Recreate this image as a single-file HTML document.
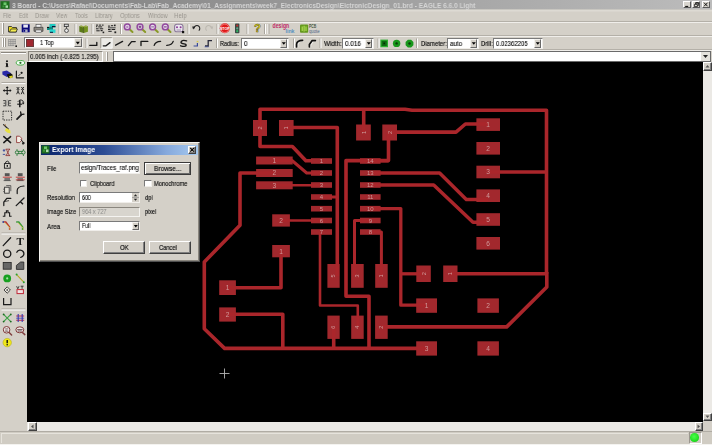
<!DOCTYPE html>
<html><head><meta charset="utf-8">
<style>
html,body{margin:0;padding:0;}
body{width:712px;height:445px;overflow:hidden;background:#d4d0c8;position:relative;font-family:"Liberation Sans",sans-serif;font-size:7px;color:#000;}
.a{position:absolute;}
.t{position:absolute;white-space:nowrap;line-height:1;transform-origin:0 0;will-change:transform;}
#title{left:0;top:0;width:712px;height:9px;background:linear-gradient(90deg,#7e7e7e 0%,#bcbcbc 100%);box-shadow:0 1px 0 #c8c6c0, 0 2.5px 0 #dddad3;}
#canvas{left:27px;top:62px;width:676px;height:360px;background:#000;}
.inp{position:absolute;background:#fff;border:1px solid #7a7a7a;border-right-color:#f0eeea;border-bottom-color:#f0eeea;box-sizing:border-box;}
.btn{position:absolute;background:#d4d0c8;border:1px solid #fff;border-right-color:#404040;border-bottom-color:#404040;box-sizing:border-box;box-shadow:inset -1px -1px 0 #808080;}
.sep{position:absolute;width:1px;background:#b0aca4;box-shadow:1px 0 0 #f4f2ee;}
.hl{position:absolute;height:1px;background:#b4b0a8;box-shadow:0 1px 0 #f0eeea;}
.m{color:#9a968f;font-size:7.6px;top:11.5px;}
.lab{font-size:7.7px;color:#000;-webkit-text-stroke:0.2px #333;}
.dd{position:absolute;background:#d4d0c8;border:1px solid #f4f2ee;border-right-color:#6a6a6a;border-bottom-color:#6a6a6a;box-sizing:border-box;}
</style></head><body>
<!-- title bar -->
<div id="title" class="a"></div>
<svg class="a" style="left:0;top:0" width="12" height="10"><rect x="0.5" y="1.2" width="9" height="7.6" fill="#1e6e1e"/><rect x="3.5" y="2.4" width="3" height="2.6" fill="#6cc86c"/><rect x="5.5" y="5.4" width="2.5" height="2.4" fill="#a8dca8"/><rect x="2.5" y="5.4" width="2" height="2" fill="#3c983c"/></svg>
<div class="t" id="ttl" style="transform:scaleX(0.9115);left:12px;top:1.6px;font-size:7.2px;font-weight:bold;color:#d6d6d6;">3 Board - C:\Users\Rafael\Documents\Fab-Lab\Fab_Academy\01_Assignments\week7_ElectronicsDesign\ElctronicDesign_01.brd - EAGLE 6.6.0 Light</div>
<!-- window buttons -->
<div class="btn" style="left:682.6px;top:1px;width:8.4px;height:6.8px;box-shadow:none;border-right-color:#5a5a5a;border-bottom-color:#5a5a5a;background:#d8d5ce;"></div>
<div class="btn" style="left:692px;top:1px;width:8.2px;height:6.8px;box-shadow:none;border-right-color:#5a5a5a;border-bottom-color:#5a5a5a;background:#d8d5ce;"></div>
<div class="btn" style="left:702px;top:1px;width:8.4px;height:6.8px;box-shadow:none;border-right-color:#5a5a5a;border-bottom-color:#5a5a5a;background:#d8d5ce;"></div>
<svg class="a" style="left:682px;top:1px" width="30" height="7" fill="none" stroke="#000"><path d="M3.2,5.4 H6.2" stroke-width="1"/><path d="M12.4,3.4 h3 v2.2 h-3z M13.6,3 v-1 h3 v2.4 h-1" stroke-width=".7"/><path d="M13.4,1.8 h3.4" stroke-width=".9"/><path d="M22,1.7 l3.6,3.6 M25.6,1.7 l-3.6,3.6" stroke-width=".9"/></svg>
<!-- menu -->
<div class="t m" style="transform:scaleX(0.6694);left:2.8px;">File</div>
<div class="t m" style="transform:scaleX(0.6874);left:19px;">Edit</div>
<div class="t m" style="transform:scaleX(0.7894);left:35px;">Draw</div>
<div class="t m" style="transform:scaleX(0.6982);left:56px;">View</div>
<div class="t m" style="transform:scaleX(0.7218);left:75px;">Tools</div>
<div class="t m" style="transform:scaleX(0.7537);left:95px;">Library</div>
<div class="t m" style="transform:scaleX(0.7527);left:120.2px;">Options</div>
<div class="t m" style="transform:scaleX(0.7255);left:147.6px;">Window</div>
<div class="t m" style="transform:scaleX(0.8128);left:174.3px;">Help</div>
<div class="hl" style="left:0;top:20.5px;width:712px;"></div>
<!-- toolbar 1 -->
<div class="a" style="left:2px;top:23px;width:1px;height:11px;background:#fff;box-shadow:1px 0 0 #9a968e;"></div>
<svg class="a" style="left:0;top:21px" width="330" height="15">
<g><path d="M8.5,5.5 h3 l1,1 h4 v4.5 h-8z" fill="#e8d820" stroke="#222" stroke-width=".8"/><path d="M9.5,11 l1.5,-3 h6.5 l-1.5,3z" fill="#f4ec50" stroke="#222" stroke-width=".7"/></g>
<g><rect x="21.7" y="3.3" width="8" height="8" fill="#0a0a7a"/><rect x="23.3" y="3.6" width="4.6" height="3" fill="#e8e8f4"/><rect x="23.6" y="8.4" width="4" height="2.9" fill="#b0b0c8"/><rect x="24" y="8.8" width="1.2" height="2" fill="#0a0a7a"/></g>
<g><rect x="36" y="3.3" width="5" height="3" fill="#f0f0f0" stroke="#444" stroke-width=".6"/><path d="M34,6.3 h9 v4 h-9z" fill="#8c8880" stroke="#3a3a3a" stroke-width=".7"/><rect x="35.8" y="9" width="5.4" height="2.6" fill="#e4e4e4" stroke="#444" stroke-width=".5"/></g>
<g><rect x="49.5" y="3" width="6" height="3.4" fill="#20c8c0"/><rect x="47" y="5.8" width="6" height="3.2" fill="#108880"/><rect x="49.5" y="8.4" width="6" height="3.4" fill="#28d8d0"/><rect x="47" y="6" width="2" height="1" fill="#111"/><rect x="52" y="5" width="3.5" height="1.2" fill="#113"/><rect x="50" y="10.8" width="3" height="1" fill="#113"/></g>
<path d="M59,3 V13" stroke="#a8a49c" stroke-width="1"/><path d="M60,3 V13" stroke="#fff" stroke-width="1"/>
<g fill="none" stroke="#333" stroke-width=".8"><rect x="64.3" y="3.2" width="4" height="2.4" fill="#ddd"/><circle cx="66.5" cy="9.6" r="1.9" fill="#e8e8e8"/><path d="M66.5,5.6 V7.7"/></g>
<path d="M75,3 V13" stroke="#a8a49c" stroke-width="1"/><path d="M76,3 V13" stroke="#fff" stroke-width="1"/>
<g><path d="M79.3,5 l4.2,1.3 v5.7 l-4.2,-1.3z" fill="#5a7818"/><path d="M87.9,5 l-4.2,1.3 v5.7 l4.2,-1.3z" fill="#74921e"/><path d="M80.5,4 l3,1.2 l3,-1.2 v1.5 l-3,1.2 l-3,-1.2z" fill="#94a840"/><path d="M83.6,6 v6" stroke="#38480c" stroke-width=".7"/></g>
<path d="M92,3 V13" stroke="#a8a49c" stroke-width="1"/><path d="M93,3 V13" stroke="#fff" stroke-width="1"/>
<g fill="#222"><rect x="96" y="3.6" width="2.2" height="1" /><rect x="99" y="3.6" width="2.2" height="1"/><rect x="102" y="3.6" width="1.6" height="1"/><rect x="96" y="5.2" width="1.3" height="1"/><rect x="98.2" y="5.4" width="4" height="1"/><rect x="96" y="7.3" width="2.6" height="1"/><rect x="99.6" y="7.3" width="3.6" height="1"/><rect x="96.3" y="9.3" width="3.4" height="1"/><rect x="100.6" y="9" width="2" height="1.2"/><rect x="102.6" y="10.6" width="1.6" height="1.6"/></g>
<g fill="#222"><rect x="108" y="4.6" width="2.2" height="1" /><rect x="111" y="4.2" width="2.2" height="1"/><rect x="114" y="3.6" width="1.6" height="1.6"/><rect x="108" y="6.2" width="7.6" height="1.2" fill="#555"/><rect x="108" y="8" width="2.6" height="1"/><rect x="111.6" y="8" width="3.6" height="1"/><rect x="108.3" y="9.8" width="3.4" height="1"/><rect x="114.4" y="10.4" width="1.8" height="1.8"/></g>
<path d="M120.5,3 V13" stroke="#a8a49c" stroke-width="1"/><path d="M121.5,3 V13" stroke="#fff" stroke-width="1"/>
<g><path d="M129.3,8 L132.5,11" stroke="#8a9a28" stroke-width="2" stroke-linecap="round"/><circle cx="127.3" cy="5.9" r="2.9" fill="#e8dcec" stroke="#924a9e" stroke-width="1.5"/><circle cx="127.3" cy="5.9" r="1.2" fill="#8a3898" opacity=".5"/></g>
<g><path d="M142,8 L145.2,11" stroke="#8a9a28" stroke-width="2" stroke-linecap="round"/><circle cx="140" cy="5.9" r="2.9" fill="#e8dcec" stroke="#924a9e" stroke-width="1.5"/><path d="M138.6,5.9 h2.8 M140,4.5 v2.8" stroke="#5a2868" stroke-width=".9"/></g>
<g><path d="M154.6,8 L157.79999999999998,11" stroke="#8a9a28" stroke-width="2" stroke-linecap="round"/><circle cx="152.6" cy="5.9" r="2.9" fill="#e8dcec" stroke="#924a9e" stroke-width="1.5"/><path d="M151.2,5.9 h2.8" stroke="#7a5888" stroke-width=".9"/></g>
<g><path d="M167.3,8 L170.5,11" stroke="#8a9a28" stroke-width="2" stroke-linecap="round"/><circle cx="165.3" cy="5.9" r="2.9" fill="#e8dcec" stroke="#924a9e" stroke-width="1.5"/><path d="M163.9,5.9 h2.8" stroke="#7a3888" stroke-width="1.1"/></g>
<g><rect x="174.6" y="3.2" width="8.4" height="7.6" rx="2.4" fill="#ece8f0" stroke="#8a7898" stroke-width="1.1"/><circle cx="177" cy="6.3" r="1" fill="#8a3898"/><circle cx="180.6" cy="6.3" r="1" fill="#8a3898"/><rect x="182" y="10" width="2.2" height="2.2" fill="#111"/><path d="M176.5,9 h4.5" stroke="#8a7898" stroke-width=".8"/></g>
<path d="M188,3 V13" stroke="#a8a49c" stroke-width="1"/><path d="M189,3 V13" stroke="#fff" stroke-width="1"/>
<path d="M194,7.4 a2.9,2.9 0 1 1 4.8,2.2" fill="none" stroke="#222" stroke-width="1.05"/><path d="M192.2,5.6 l3.2,0 l-2.3,2.9z" fill="#222"/>
<path d="M211.5,7.4 a2.9,2.9 0 1 0 -4.8,2.2" fill="none" stroke="#bcb8b0" stroke-width="1.05"/><path d="M213.2,5.6 l-3.2,0 l2.3,2.9z" fill="#bcb8b0"/>
<path d="M217,3 V13" stroke="#a8a49c" stroke-width="1"/><path d="M218,3 V13" stroke="#fff" stroke-width="1"/>
<circle cx="224.8" cy="7.3" r="5" fill="#e01818"/><circle cx="224.8" cy="7.3" r="4.2" fill="none" stroke="#f8d0d0" stroke-width=".5"/><text x="224.8" y="8.7" font-size="3.6" font-weight="bold" font-family="Liberation Sans, sans-serif" fill="#fff" text-anchor="middle">STOP</text>
<rect x="235" y="2.6" width="4.4" height="9.6" rx=".8" fill="#3a4a44"/><circle cx="237.2" cy="4.6" r="1.1" fill="#c03030"/><circle cx="237.2" cy="7.4" r="1.1" fill="#58a888"/><circle cx="237.2" cy="10.2" r="1.1" fill="#30b060"/>
<path d="M247,3 V13" stroke="#a8a49c" stroke-width="1"/><path d="M248,3 V13" stroke="#fff" stroke-width="1"/>
<text x="257.6" y="11.4" font-size="11.5" font-weight="bold" font-family="Liberation Sans, sans-serif" fill="#e8dc20" stroke="#4a4610" stroke-width=".45" text-anchor="middle">?</text>
<path d="M264.5,3 V13" stroke="#a8a49c" stroke-width="1"/><path d="M265.5,3 V13" stroke="#fff" stroke-width="1"/>
<path d="M268,3 V13" stroke="#fff" stroke-width="1"/><path d="M269,3 V13" stroke="#a8a49c" stroke-width="1"/>
<text x="272.6" y="7.4" font-size="6.4" font-weight="bold" font-family="Liberation Sans, sans-serif" fill="#c02c66" textLength="16.6" lengthAdjust="spacingAndGlyphs">design</text>
<text x="285.5" y="12" font-size="5" font-weight="bold" font-family="Liberation Sans, sans-serif" fill="#5890c0" textLength="9" lengthAdjust="spacingAndGlyphs">link</text>
<rect x="300" y="3.5" width="8.2" height="8.2" rx="1" fill="#64981c"/><path d="M302.2,5.4 v4.6 M304.1,4.8 v5.8 M306,5.4 v4.6" stroke="#b4e058" stroke-width="1.1"/>
<text x="309" y="7.4" font-size="4.6" font-weight="bold" font-family="Liberation Sans, sans-serif" fill="#46543e" textLength="7.2" lengthAdjust="spacingAndGlyphs">PCB</text>
<text x="309" y="11.8" font-size="4.6" font-family="Liberation Sans, sans-serif" fill="#4a6486" textLength="10.6" lengthAdjust="spacingAndGlyphs">quote</text>
</svg>
<div class="hl" style="left:0;top:35px;width:712px;"></div>
<!-- toolbar 2 -->
<div class="a" style="left:2px;top:38px;width:1px;height:9px;background:#fff;box-shadow:1px 0 0 #9a968e;"></div><div class="a" style="left:4.2px;top:38px;width:1px;height:9px;background:#fff;box-shadow:1px 0 0 #9a968e;"></div>
<svg class="a" style="left:0;top:36px" width="712" height="13">
<g stroke="#8a8a8a" stroke-width=".7" fill="none"><path d="M8.4,3.6 h7.6 M8.4,5.6 h7.6 M8.4,7.6 h7.6 M8.4,9.6 h6 M8.6,3.4 v6.6 M10.8,3.4 v6.6 M13,3.4 v6.6 M15.2,3.4 v5"/></g><rect x="15.4" y="9.4" width="1.6" height="1.6" fill="#111"/>
<path d="M86,2.5 V12" stroke="#a8a49c" stroke-width="1"/><path d="M87,2.5 V12" stroke="#fff" stroke-width="1"/>
<path d="M89.8,9.4 H96.8 V6.4" fill="none" stroke="#1a1a1a" stroke-width="1.35" stroke-linecap="round" stroke-linejoin="round"/>
<rect x="100.8" y="1.6" width="11.4" height="10.6" fill="#ecebe7"/><path d="M100.8,12.2 V1.6 H112.2" stroke="#8a867e" stroke-width=".8" fill="none"/><path d="M112.2,1.6 V12.2 H100.8" stroke="#fff" stroke-width=".8" fill="none"/>
<path d="M103.3,9.8 H106 L110,6.6" fill="none" stroke="#1a1a1a" stroke-width="1.35" stroke-linecap="round" stroke-linejoin="round"/>
<path d="M115.6,9.2 L122.6,5.4" fill="none" stroke="#1a1a1a" stroke-width="1.35" stroke-linecap="round" stroke-linejoin="round"/>
<path d="M128.4,9.6 L131.6,5.6 H135.2" fill="none" stroke="#1a1a1a" stroke-width="1.35" stroke-linecap="round" stroke-linejoin="round"/>
<path d="M141,9.6 V5.4 H147.8" fill="none" stroke="#1a1a1a" stroke-width="1.35" stroke-linecap="round" stroke-linejoin="round"/>
<path d="M154.2,9.4 Q155.4,5.6 160.6,5.4" fill="none" stroke="#1a1a1a" stroke-width="1.35" stroke-linecap="round" stroke-linejoin="round"/>
<path d="M166.8,9.4 Q172,9 173.2,5.4" fill="none" stroke="#1a1a1a" stroke-width="1.35" stroke-linecap="round" stroke-linejoin="round"/>
<path d="M186.6,4.8 Q181.4,3.6 181,6.2 Q181,7.6 184,7.8 Q186.8,8.2 186,9.8 Q185,11 180.6,9.8" fill="none" stroke="#1a1a1a" stroke-width="1.35" stroke-linecap="round" stroke-linejoin="round"/>
<path d="M193.6,10 H197.4 V7" fill="none" stroke="#3a4a9a" stroke-width="1.2"/><path d="M196.6,5.6 h1.8" stroke="#d8cc50" stroke-width="1.4"/>
<path d="M205,10 H208.2 V4.6 H212" fill="none" stroke="#2a2a3a" stroke-width="1.3"/><path d="M204.6,10.8 h4" stroke="#4858a8" stroke-width=".8"/>
<path d="M216.5,2.5 V12" stroke="#a8a49c" stroke-width="1"/><path d="M217.5,2.5 V12" stroke="#fff" stroke-width="1"/>
<path d="M293.5,2.5 V12" stroke="#a8a49c" stroke-width="1"/><path d="M294.5,2.5 V12" stroke="#fff" stroke-width="1"/>
<path d="M297.6,11 V8.4 Q298,5 303.4,4.8" fill="none" stroke="#f4f2ee" stroke-width="1.6"/><path d="M296.6,10.8 V8 Q297,4.6 302.6,4.4" fill="none" stroke="#111" stroke-width="1.7" stroke-linecap="round"/>
<path d="M310.4,11 V9 L313.2,5 H316.2" fill="none" stroke="#f4f2ee" stroke-width="1.6"/><path d="M309.4,10.8 V8.6 L312.2,4.6 H315.4" fill="none" stroke="#111" stroke-width="1.7" stroke-linecap="round" stroke-linejoin="round"/>
<path d="M320,2.5 V12" stroke="#a8a49c" stroke-width="1"/><path d="M321,2.5 V12" stroke="#fff" stroke-width="1"/>
<path d="M378,2.5 V12" stroke="#a8a49c" stroke-width="1"/><path d="M379,2.5 V12" stroke="#fff" stroke-width="1"/>
<rect x="380.4" y="3.6" width="7.6" height="7.6" fill="#2cb030"/><rect x="381.6" y="4.8" width="5.2" height="5.2" fill="#0e6a12"/><rect x="383.4" y="6.6" width="1.6" height="1.6" fill="#062a06"/>
<circle cx="396.6" cy="7.4" r="3.7" fill="#18981c"/><circle cx="396.6" cy="7.4" r="1.2" fill="#0a3a0a"/>
<path d="M407.9,3.7 h3.2 l2.3,2.3 v3.2 l-2.3,2.3 h-3.2 l-2.3,-2.3 v-3.2z" fill="#18981c"/><circle cx="409.5" cy="7.5" r="1.2" fill="#0a3a0a"/>
<path d="M416.5,2.5 V12" stroke="#a8a49c" stroke-width="1"/><path d="M417.5,2.5 V12" stroke="#fff" stroke-width="1"/>
</svg>
<div class="inp" style="left:23.5px;top:37.2px;width:59px;height:10.8px;"></div>
<div class="a" style="left:25.8px;top:38.8px;width:8.4px;height:7.8px;background:#a02830;border:1px solid #6a3a3a;box-sizing:border-box;"></div>
<div class="t" style="transform:scaleX(0.7451);left:40px;top:39.5px;font-size:7.6px;-webkit-text-stroke:0.15px #333;margin-top:-0.2px;">1 Top</div>
<div class="dd" style="left:74.3px;top:38.2px;width:7.3px;height:8.8px;"></div>
<svg class="a" style="left:74px;top:38px" width="8" height="10"><path d="M1.8,3.8 h4 l-2,2.6z" fill="#000"/></svg>
<div class="t lab" style="transform:scaleX(0.7247);left:219.5px;top:39.5px;">Radius:</div>
<div class="inp" style="left:240.5px;top:38px;width:48px;height:10.5px;"></div>
<div class="t" style="transform:scaleX(0.8390);left:243.5px;top:40px;font-size:7.5px;-webkit-text-stroke:0.15px #333;margin-top:-0.2px;">0</div>
<div class="dd" style="left:280.2px;top:39px;width:7.3px;height:8.5px;"></div>
<svg class="a" style="left:280px;top:39px" width="8" height="9"><path d="M1.8,3.2 h4 l-2,2.6z" fill="#000"/></svg>
<div class="t lab" style="transform:scaleX(0.8120);left:323.5px;top:39.5px;">Width:</div>
<div class="inp" style="left:342px;top:38px;width:31.5px;height:10.5px;"></div>
<div class="t" style="transform:scaleX(0.8519);left:344.5px;top:40px;font-size:7.5px;-webkit-text-stroke:0.15px #333;margin-top:-0.2px;">0.016</div>
<div class="dd" style="left:365.2px;top:39px;width:7.3px;height:8.5px;"></div>
<svg class="a" style="left:365px;top:39px" width="8" height="9"><path d="M1.8,3.2 h4 l-2,2.6z" fill="#000"/></svg>
<div class="t lab" style="transform:scaleX(0.7741);left:420.5px;top:39.5px;">Diameter:</div>
<div class="inp" style="left:447px;top:38px;width:31.5px;height:10.5px;"></div>
<div class="t" style="transform:scaleX(0.8282);left:450px;top:40px;font-size:7.5px;-webkit-text-stroke:0.15px #333;margin-top:-0.2px;">auto</div>
<div class="dd" style="left:470.2px;top:39px;width:7.3px;height:8.5px;"></div>
<svg class="a" style="left:470px;top:39px" width="8" height="9"><path d="M1.8,3.2 h4 l-2,2.6z" fill="#000"/></svg>
<div class="t lab" style="transform:scaleX(0.7675);left:480.5px;top:39.5px;">Drill:</div>
<div class="inp" style="left:493px;top:38px;width:49.5px;height:10.5px;"></div>
<div class="t" style="transform:scaleX(0.8000);left:495.5px;top:40px;font-size:7.5px;-webkit-text-stroke:0.15px #333;margin-top:-0.2px;">0.02362205</div>
<div class="dd" style="left:534.2px;top:39px;width:7.3px;height:8.5px;"></div>
<svg class="a" style="left:534px;top:39px" width="8" height="9"><path d="M1.8,3.2 h4 l-2,2.6z" fill="#000"/></svg>
<div class="hl" style="left:0;top:49px;width:712px;"></div>
<!-- command row -->
<div class="a" style="left:1px;top:52.2px;width:25px;height:1px;background:#8a867e;box-shadow:0 1px 0 #fff;"></div>
<div class="a" style="left:27.5px;top:51px;width:75.5px;height:10.5px;border:1px solid #8a867e;border-right-color:#fff;border-bottom-color:#fff;box-sizing:border-box;"></div>
<div class="t" style="transform:scaleX(0.8102);left:30px;top:52.8px;font-size:7.6px;-webkit-text-stroke:0.15px #333;margin-top:-0.2px;">0.005 inch (-0.825 1.295)</div>
<div class="a" style="left:106px;top:52px;width:1px;height:9px;background:#fff;box-shadow:1px 0 0 #9a968e;"></div>
<div class="inp" style="left:112.5px;top:51px;width:598px;height:11px;border-color:#6a6a6a;"></div>
<svg class="a" style="left:701px;top:52px" width="9" height="9"><rect width="9" height="9" fill="#e4e2dc"/><path d="M2,3 h5 l-2.5,3z" fill="#222"/></svg>
<!-- canvas -->
<div id="canvas" class="a"></div>
<svg class="a" style="left:0;top:0" width="712" height="445">
<g fill="#a2282d">
<rect x="253" y="120" width="14" height="16"/>
<rect x="279" y="120" width="14.6" height="16"/>
<rect x="356.1" y="124.5" width="14.7" height="16"/>
<rect x="382.3" y="124.5" width="14.7" height="16"/>
<rect x="476.4" y="118.3" width="23.6" height="12.6"/>
<rect x="476.4" y="142" width="23.6" height="12.6"/>
<rect x="476.4" y="165.7" width="23.6" height="12.6"/>
<rect x="476.4" y="189.4" width="23.6" height="12.6"/>
<rect x="476.4" y="213.2" width="23.6" height="12.6"/>
<rect x="476.4" y="237" width="23.6" height="12.6"/>
<rect x="256.1" y="156.5" width="36.6" height="8"/>
<rect x="256.1" y="169" width="36.6" height="8"/>
<rect x="256.1" y="181.3" width="36.6" height="8"/>
<rect x="311" y="158.2" width="21" height="5.6"/>
<rect x="360" y="158.2" width="20.6" height="5.6"/>
<rect x="311" y="170.2" width="21" height="5.6"/>
<rect x="360" y="170.2" width="20.6" height="5.6"/>
<rect x="311" y="182.2" width="21" height="5.6"/>
<rect x="360" y="182.2" width="20.6" height="5.6"/>
<rect x="311" y="194.2" width="21" height="5.6"/>
<rect x="360" y="194.2" width="20.6" height="5.6"/>
<rect x="311" y="205.89999999999998" width="21" height="5.6"/>
<rect x="360" y="205.89999999999998" width="20.6" height="5.6"/>
<rect x="311" y="217.7" width="21" height="5.6"/>
<rect x="360" y="217.7" width="20.6" height="5.6"/>
<rect x="311" y="229.2" width="21" height="5.6"/>
<rect x="360" y="229.2" width="20.6" height="5.6"/>
<rect x="272.2" y="214.3" width="17.7" height="12.3"/>
<rect x="272.2" y="245" width="17.7" height="12.3"/>
<rect x="219.2" y="280.3" width="16.7" height="14.7"/>
<rect x="219.2" y="307.4" width="16.7" height="14.2"/>
<rect x="327.4" y="264" width="12.3" height="23.8"/>
<rect x="351.1" y="264" width="12.6" height="23.8"/>
<rect x="375.2" y="264" width="12.5" height="23.8"/>
<rect x="327.4" y="315.6" width="12.3" height="23.3"/>
<rect x="351.2" y="315.6" width="12.5" height="23.3"/>
<rect x="375.1" y="315.6" width="12.6" height="23.3"/>
<rect x="416.3" y="265.5" width="14.5" height="16.5"/>
<rect x="443.2" y="265.5" width="14.3" height="16.5"/>
<rect x="416.2" y="298.4" width="20.8" height="14.4"/>
<rect x="477.4" y="298.4" width="21.5" height="14.4"/>
<rect x="416.2" y="341.3" width="20.8" height="14.3"/>
<rect x="477.4" y="341.3" width="21.5" height="14.3"/>
</g>
<g fill="none" stroke="#aa262b" stroke-linejoin="round" stroke-linecap="butt">
<path d="M312,160.8 H305.9 L292.4,146.5 H260 V109.3 H405 L412,110.3 H546.5 V273.8" stroke-width="3.6"/>
<path d="M286.3,127.5 H337.3 V276" stroke-width="3.6"/>
<path d="M321.5,197 H337" stroke-width="3"/>
<path d="M363.7,109.3 V132.5" stroke-width="3.6"/>
<path d="M389.6,132.1 H456 L465.4,124 H488" stroke-width="3.6"/>
<path d="M388.5,132.5 V160.6 H346 V296.3 H369 V348.4" stroke-width="3.6"/>
<path d="M370,160.8 H388.5" stroke-width="3.2"/>
<path d="M274,173 H240 V225.2 L204.3,262 V328.7 L224.6,348.4 H426.6" stroke-width="3.6"/>
<path d="M274,160.5 H292 L306.7,173 H321" stroke-width="3"/>
<path d="M274,185.2 H321" stroke-width="2.4"/>
<path d="M281,220.5 H321" stroke-width="2.4"/>
<path d="M281,251 V287.8 H227.5" stroke-width="3.6"/>
<path d="M227.5,314.3 H282.8 V348.4" stroke-width="3.6"/>
<path d="M320,232 V305.5 H357.8 V327" stroke-width="2.6"/>
<path d="M370,173 H439.6 L466.3,199.4 H488" stroke-width="3.5"/>
<path d="M370,185 H433.7 L473,222.2 H488" stroke-width="3.5"/>
<path d="M370,208.6 H400.8 V305.2 H426.6" stroke-width="3.3"/>
<path d="M400.8,273.8 H423.5" stroke-width="3.3"/>
<path d="M370,220.5 H354.5 V276" stroke-width="3"/>
<path d="M370,232 H381.4 V276" stroke-width="3"/>
<path d="M450.3,273.8 H546.5" stroke-width="3.6"/>
<path d="M546.8,272 V287 L506.7,326.9 H381.4" stroke-width="3.6"/>
<path d="M333.7,327 V348.4" stroke-width="3.6"/>
<path d="M488,172 H546.5" stroke-width="3.6"/>
</g>
<g fill="#d09a9a" font-family="Liberation Sans, sans-serif" text-anchor="middle">
<text x="260.0" y="128.0" font-size="5.6" fill="#d0a0a0" transform="rotate(-90 260.0 128.0)" dy="2">2</text>
<text x="286.3" y="128.0" font-size="5.6" fill="#d0a0a0" transform="rotate(-90 286.3 128.0)" dy="2">1</text>
<text x="363.5" y="132.5" font-size="5.6" fill="#d0a0a0" transform="rotate(-90 363.5 132.5)" dy="2">1</text>
<text x="389.7" y="132.5" font-size="5.6" fill="#d0a0a0" transform="rotate(-90 389.7 132.5)" dy="2">2</text>
<text x="488.2" y="126.9" font-size="6.6">1</text>
<text x="488.2" y="150.6" font-size="6.6">2</text>
<text x="488.2" y="174.3" font-size="6.6">3</text>
<text x="488.2" y="198.0" font-size="6.6">4</text>
<text x="488.2" y="221.8" font-size="6.6">5</text>
<text x="488.2" y="245.6" font-size="6.6">6</text>
<text x="274.4" y="162.8" font-size="6.6">1</text>
<text x="274.4" y="175.3" font-size="6.6">2</text>
<text x="274.4" y="187.6" font-size="6.6">3</text>
<text x="321.5" y="163.3" font-size="6">1</text>
<text x="370.3" y="163.3" font-size="6">14</text>
<text x="321.5" y="175.3" font-size="6">2</text>
<text x="370.3" y="175.3" font-size="6">13</text>
<text x="321.5" y="187.3" font-size="6">3</text>
<text x="370.3" y="187.3" font-size="6">12</text>
<text x="321.5" y="199.3" font-size="6">4</text>
<text x="370.3" y="199.3" font-size="6">11</text>
<text x="321.5" y="211.0" font-size="6">5</text>
<text x="370.3" y="211.0" font-size="6">10</text>
<text x="321.5" y="222.8" font-size="6">6</text>
<text x="370.3" y="222.8" font-size="6">9</text>
<text x="321.5" y="234.3" font-size="6">7</text>
<text x="370.3" y="234.3" font-size="6">8</text>
<text x="281.1" y="222.8" font-size="6.6">2</text>
<text x="281.1" y="253.5" font-size="6.6">1</text>
<text x="227.5" y="290.0" font-size="6.6">1</text>
<text x="227.5" y="316.8" font-size="6.6">2</text>
<text x="333.5" y="275.9" font-size="5.6" fill="#d0a0a0" transform="rotate(-90 333.5 275.9)" dy="2">5</text>
<text x="357.4" y="275.9" font-size="5.6" fill="#d0a0a0" transform="rotate(-90 357.4 275.9)" dy="2">3</text>
<text x="381.4" y="275.9" font-size="5.6" fill="#d0a0a0" transform="rotate(-90 381.4 275.9)" dy="2">1</text>
<text x="333.5" y="327.2" font-size="5.6" fill="#d0a0a0" transform="rotate(-90 333.5 327.2)" dy="2">6</text>
<text x="357.4" y="327.2" font-size="5.6" fill="#d0a0a0" transform="rotate(-90 357.4 327.2)" dy="2">4</text>
<text x="381.4" y="327.2" font-size="5.6" fill="#d0a0a0" transform="rotate(-90 381.4 327.2)" dy="2">2</text>
<text x="423.6" y="273.8" font-size="5.6" fill="#d0a0a0" transform="rotate(-90 423.6 273.8)" dy="2">2</text>
<text x="450.3" y="273.8" font-size="5.6" fill="#d0a0a0" transform="rotate(-90 450.3 273.8)" dy="2">1</text>
<text x="426.6" y="307.9" font-size="6.6">1</text>
<text x="488.1" y="307.9" font-size="6.6">2</text>
<text x="426.6" y="350.8" font-size="6.6">3</text>
<text x="488.1" y="350.8" font-size="6.6">4</text>
</g>
<path d="M219.5,373.5 H229.5 M224.5,368.5 V378.5" stroke="#b4b4b4" stroke-width=".9" fill="none"/>
</svg>
<!-- left toolbar -->
<svg class="a" style="left:0;top:56px" width="27" height="300">
<circle cx="7.0" cy="5.300000000000002" r="1.05" fill="#1a1a1a"/><path d="M7.0,7.200000000000001 v3.4" stroke="#1a1a1a" stroke-width="2"/><path d="M5.800000000000001,7.400000000000001 h1.2 M5.7,10.600000000000001 h2.6" stroke="#1a1a1a" stroke-width=".9"/>
<ellipse cx="20.4" cy="6.800000000000002" rx="4.2" ry="2.3" fill="#f4fff4" stroke="#38a838" stroke-width=".9"/><circle cx="20.4" cy="6.800000000000002" r="1.1" fill="#286828"/>
<path d="M2.4,15.599999999999994 l4.4,-1 l4,2.4 v2.6 l-4,1.4 l-4.4,-2.4z" fill="#2828a8"/><path d="M6.6,18.599999999999994 l4.2,-1.4 l1.8,1.6 v2.4 l-4,1 z" fill="#111"/><path d="M9,20.199999999999996 l3.6,-.8 v2.2 l-2.6,.8z" fill="#d8d020"/>
<path d="M16.4,15.199999999999994 V21.799999999999994 H23.6" fill="none" stroke="#1a1a1a" stroke-width="1.2" stroke-linecap="round" stroke-linejoin="round"/><circle cx="21.6" cy="16.799999999999994" r="1.1" fill="#1a1a1a"/><path d="M18.4,19.999999999999993 l2,-2" stroke="#1a1a1a" stroke-width=".8"/>
<path d="M1.5,26.599999999999994 H25.5" stroke="#a8a49c" stroke-width="1"/><path d="M1.5,27.599999999999994 H25.5" stroke="#fff" stroke-width="1"/>
<path d="M3.6,34.599999999999994 H10.8 M7.2,30.999999999999993 V38.199999999999996" stroke="#1a1a1a" stroke-width="1"/><path d="M2.8,34.599999999999994 l1.8,-1.5 v3z M11.600000000000001,34.599999999999994 l-1.8,-1.5 v3z M7.2,30.199999999999996 l-1.5,1.8 h3z M7.2,38.99999999999999 l-1.5,-1.8 h3z" fill="#1a1a1a"/>
<path d="M16.7,30.999999999999993 l2.6,3 M19.3,30.999999999999993 l-2.6,3 M18.0,33.599999999999994 v1.6 M18.0,35.199999999999996 l-1.4,3 M18.0,35.199999999999996 l1.4,3" stroke="#1a1a1a" stroke-width=".9" fill="none"/>
<path d="M21.299999999999997,30.999999999999993 l2.6,3 M23.9,30.999999999999993 l-2.6,3 M22.599999999999998,33.599999999999994 v1.6 M22.599999999999998,35.199999999999996 l-1.4,3 M22.599999999999998,35.199999999999996 l1.4,3" stroke="#1a1a1a" stroke-width=".9" fill="none"/>
<path d="M3.2,44.6 h2.6 v5.2 h-2.6 M11.2,44.6 h-2.6 v5.2 h2.6 M3.6,47.2 h1.6 M10.8,47.2 h-1.6" stroke="#333" stroke-width=".9" fill="none"/><path d="M7.2,43.6 v7.2" stroke="#666" stroke-width=".6" stroke-dasharray="1 1"/>
<path d="M19.8,44.2 V51.2" stroke="#1a1a1a" stroke-width="1.5"/><path d="M17.2,48.2 h5" stroke="#1a1a1a" stroke-width="1.1"/><path d="M17.8,45.800000000000004 q2.6,-3.4 5.4,-.6 v2" fill="none" stroke="#1a1a1a" stroke-width=".9"/><path d="M23.2,48.6 l-1.4,-1.8 h2.8z" fill="#1a1a1a"/>
<rect x="3.0" y="55.199999999999996" width="8.6" height="8.8" fill="none" stroke="#1a1a1a" stroke-width=".9" stroke-dasharray="1.3 1.1"/>
<path d="M17.0,63.199999999999996 L21.2,58.8" stroke="#1a1a1a" stroke-width="1.7" stroke-linecap="round"/><path d="M20.599999999999998,55.99999999999999 l.6,3 M24.0,58.199999999999996 l-3,.4" stroke="#1a1a1a" stroke-width="1.3" stroke-linecap="round"/>
<path d="M3.6,68.6 L8.4,73.19999999999999" stroke="#2a2a2a" stroke-width="1.3" stroke-linecap="round"/><path d="M6.6000000000000005,72.0 l3.6,2.2 l.4,3.4 l-3.6,-1 l-2.2,-2.4z" fill="#e8e040"/><path d="M4.6,69.39999999999999 l1.4,-.6" stroke="#a06020" stroke-width=".9"/>
<path d="M3.8000000000000003,80.6 L10.6,86.6 M10.6,80.6 L3.8000000000000003,86.6" stroke="#1a1a1a" stroke-width="1.5" stroke-linecap="round"/>
<path d="M16.599999999999998,80.19999999999999 h3 l2,2 v2.4 l-2,2 h-3z" fill="#f4f0e8" stroke="#8a2828" stroke-width=".8"/><path d="M20.8,83.6 l3.4,3.6 l-1.6,.2 l.6,1.4" fill="none" stroke="#1a1a1a" stroke-width=".9"/><rect x="22.2" y="86.19999999999999" width="2.2" height="1.6" fill="#1a1a1a"/>
<path d="M5.800000000000001,93.2 q3.6,3.2 0,6.4 M9.8,93.2 q-3.6,3.2 0,6.4 M5.800000000000001,93.2 H10.0 M5.800000000000001,99.60000000000001 H10.0" fill="none" stroke="#8a2828" stroke-width=".8"/><path d="M2.8,94.4 h2.4 M2.8,98.4 h2.4 M4.0,93.0 v2.8" stroke="#384898" stroke-width=".9"/>
<path d="M17.599999999999998,95.4 H22.8 M17.599999999999998,97.60000000000001 H22.8" stroke="#287838" stroke-width=".9"/><circle cx="17.0" cy="96.4" r="1.7" fill="none" stroke="#287838" stroke-width=".9"/><circle cx="23.4" cy="96.4" r="1.7" fill="none" stroke="#287838" stroke-width=".9"/><path d="M17.0,93.0 v1.4 M23.4,93.0 v1.4 M17.0,98.4 v1.6 M23.4,98.4 v1.6" stroke="#287838" stroke-width=".8"/>
<rect x="4.4" y="107.60000000000001" width="5.8" height="4.6" fill="#d8d4cc" stroke="#1a1a1a" stroke-width=".9"/><path d="M5.6,107.60000000000001 v-1.4 q1.7,-2.2 3.4,0 v1.4" fill="none" stroke="#1a1a1a" stroke-width=".9"/><rect x="6.6000000000000005" y="109.00000000000001" width="1.4" height="1.8" fill="#1a1a1a"/>
<rect x="4.800000000000001" y="117.19999999999999" width="4.8" height="3" fill="#555"/><rect x="4.4" y="121.99999999999999" width="5.6" height="2.8" fill="#777"/><path d="M2.8,121.19999999999999 H11.8" stroke="#c03030" stroke-width=".9"/><path d="M3.6,124.6 H10.8" stroke="#444" stroke-width=".7"/>
<rect x="17.8" y="117.19999999999999" width="4.8" height="3" fill="#555"/><rect x="17.4" y="121.99999999999999" width="5.6" height="2.8" fill="#777"/><path d="M15.799999999999999,121.19999999999999 H24.799999999999997" stroke="#c03030" stroke-width=".9"/><path d="M16.599999999999998,124.6 H23.8" stroke="#444" stroke-width=".7"/>
<path d="M15.799999999999999,123.79999999999998 H24.799999999999997" stroke="#c03030" stroke-width=".8"/>
<rect x="4.6" y="131.2" width="4.6" height="6" fill="#e4e0d8" stroke="#333" stroke-width=".9"/><path d="M6.2,129.6 h4.6 v5.6 M3.2,133.2 h1.4 M3.2,135.6 h1.4" fill="none" stroke="#444" stroke-width=".8"/>
<path d="M17.2,137.6 V134.2 Q17.599999999999998,130.4 24.0,130.0" fill="none" stroke="#1a1a1a" stroke-width="1.2" stroke-linecap="round" stroke-linejoin="round"/>
<path d="M3.8000000000000003,149.6 V146.2 L6.8,142.4 H10.8" fill="none" stroke="#1a1a1a" stroke-width="1.2" stroke-linecap="round" stroke-linejoin="round"/><path d="M3.8000000000000003,145.79999999999998 L9.0,144.6" stroke="#1a1a1a" stroke-width=".7"/>
<path d="M16.2,149.6 L24.0,142.0" stroke="#1a1a1a" stroke-width="1.3" stroke-linecap="round"/><path d="M20.4,145.79999999999998 l2.6,2.4" stroke="#1a1a1a" stroke-width="1.5"/>
<path d="M2.8,160.2 h2 v-3.4 h1.6 v-2 h1.6 v2 h1.6 v3.4 h2" fill="none" stroke="#1a1a1a" stroke-width="1.1"/>
<path d="M3.2,166.0 h2.6 L9.6,171.0 v3" fill="none" stroke="#b83030" stroke-width="1.4"/><path d="M4.6,166.4 L10.0,172.0 v2" fill="none" stroke="#d8c850" stroke-width=".8"/><circle cx="3.2" cy="166.0" r=".9" fill="#384898"/>
<path d="M16.2,166.0 h2.6 L22.599999999999998,171.0 v3" fill="none" stroke="#38983c" stroke-width="1.5"/><path d="M17.8,166.6 L23.2,172.2 v1.8" fill="none" stroke="#d8c850" stroke-width=".8"/>
<path d="M1.5,177 H25.5" stroke="#a8a49c" stroke-width="1"/><path d="M1.5,178 H25.5" stroke="#fff" stroke-width="1"/>
<path d="M3.2,189.6 L10.6,181.79999999999998" stroke="#1a1a1a" stroke-width="1.3" stroke-linecap="round"/>
<text x="20.2" y="189.4" font-family="Liberation Serif, serif" font-weight="bold" font-size="11" fill="#1a1a1a" text-anchor="middle">T</text>
<circle cx="7.2" cy="197.8" r="3.6" fill="none" stroke="#1a1a1a" stroke-width="1.3"/>
<path d="M16.8,196.20000000000002 A3.7,3.7 0 1 1 20.8,201.4" fill="none" stroke="#1a1a1a" stroke-width="1.3" stroke-linecap="round"/>
<rect x="3.2" y="206.4" width="8" height="6.8" fill="#666" stroke="#222" stroke-width=".8"/>
<path d="M16.4,213.4 V209.4 L20.599999999999998,206.0 H23.8 V213.4z" fill="#666" stroke="#222" stroke-width=".8"/>
<circle cx="7.2" cy="222.39999999999998" r="3.9" fill="#18a020"/><circle cx="7.2" cy="222.39999999999998" r="1.1" fill="#a8e0a8"/>
<path d="M16.599999999999998,218.59999999999997 L23.8,226.2" stroke="#b8a828" stroke-width="1.1"/><circle cx="16.599999999999998" cy="218.59999999999997" r="1" fill="#28a030"/><circle cx="23.8" cy="226.2" r="1" fill="#28a030"/>
<path d="M7.2,230.8 l3.2,3.2 l-3.2,3.2 l-3.2,-3.2z" fill="#e8e4dc" stroke="#333" stroke-width=".9"/><circle cx="7.2" cy="234" r=".9" fill="#555"/>
<rect x="17.0" y="233.6" width="6.4" height="4" fill="#f0e4e4" stroke="#c02838" stroke-width="1"/><path d="M16.599999999999998,230.2 l1.2,2.6 l1.2,-2.6 M20.599999999999998,230.2 h3 M22.099999999999998,230.2 v2.6" fill="none" stroke="#222" stroke-width=".8"/>
<path d="M3.6,242.00000000000003 V248.60000000000002 H11.0 V242.00000000000003" fill="none" stroke="#1a1a1a" stroke-width="1.2"/>
<path d="M1.5,253 H25.5" stroke="#a8a49c" stroke-width="1"/><path d="M1.5,254 H25.5" stroke="#fff" stroke-width="1"/>
<path d="M3.6,258.4 L10.8,265.6 M10.8,258.4 L3.6,265.6" stroke="#38a040" stroke-width="1.1"/><circle cx="3.6" cy="258.4" r=".9" fill="#1a6a20"/><circle cx="10.8" cy="258.4" r=".9" fill="#1a6a20"/><circle cx="3.6" cy="265.6" r=".9" fill="#1a6a20"/><circle cx="10.8" cy="265.6" r=".9" fill="#1a6a20"/>
<path d="M16.2,260 H24.2 M16.2,264.2 H24.2" stroke="#c02848" stroke-width="1.1"/><path d="M18.2,258 V266 M22.2,258 V266" stroke="#3838b0" stroke-width="1.1"/><path d="M16.2,262.2 H24.2" stroke="#3838b0" stroke-width=".8"/>
<path d="M8.6,276.0 l3,3" stroke="#804040" stroke-width="1.5" stroke-linecap="round"/><circle cx="6.6000000000000005" cy="273.79999999999995" r="3.3" fill="#ece4e4" stroke="#803838" stroke-width="1"/><path d="M5.2,272.79999999999995 h3 M5.2,274.2 h2.4 M5.2,275.4 h3" stroke="#604040" stroke-width=".6"/>
<path d="M22.2,276.2 l2.6,2.4" stroke="#804040" stroke-width="1.5" stroke-linecap="round"/><ellipse cx="19.8" cy="273.79999999999995" rx="4" ry="3" fill="#ece4e4" stroke="#803838" stroke-width="1"/><path d="M17.2,273.59999999999997 h5.4 M17.8,275.0 h4" stroke="#503030" stroke-width=".8"/>
<circle cx="7.2" cy="286.6" r="4.2" fill="#f0e818" stroke="#b8b010" stroke-width=".6"/><path d="M7.2,284.0 v3.2" stroke="#111" stroke-width="1.4"/><circle cx="7.2" cy="288.8" r=".8" fill="#111"/>
</svg>
<!-- scrollbars -->
<div class="a" style="left:703px;top:62px;width:9px;height:360px;background:#ebe9e5;"></div>
<div class="btn" style="left:703px;top:62px;width:9px;height:8.5px;"></div>
<div class="btn" style="left:703px;top:412.5px;width:9px;height:8.5px;"></div>
<svg class="a" style="left:703px;top:62px" width="9" height="360"><path d="M2.5,5.5 h4 l-2,-2.5z M2.5,353.5 h4 l-2,2.5z" fill="#555"/></svg>
<div class="a" style="left:27px;top:421.5px;width:676px;height:9.5px;background:#ebe9e5;"></div>
<div class="btn" style="left:27.5px;top:421.5px;width:9.5px;height:9px;"></div>
<div class="btn" style="left:694.5px;top:421.5px;width:8px;height:9px;"></div>
<svg class="a" style="left:27px;top:421.5px" width="676" height="9"><path d="M6.5,2.5 v4 l-2.5,-2z M670.5,2.5 v4 l2.5,-2z" fill="#555"/></svg>
<div class="a" style="left:703px;top:421px;width:9px;height:10px;background:#d4d0c8;"></div>
<!-- status bar -->
<div class="a" style="left:0;top:431px;width:712px;height:14px;background:#d0ccc3;"></div>
<div class="a" style="left:0;top:430.5px;width:712px;height:1px;background:#b0aca4;"></div>
<div class="a" style="left:2px;top:432.5px;width:686px;height:1px;background:#e6e3dc;"></div>
<div class="a" style="left:1px;top:433px;width:1px;height:10px;background:#e6e3dc;"></div>
<div class="a" style="left:0;top:443.5px;width:712px;height:2px;background:#f4f3f0;"></div>
<div class="a" style="left:689px;top:432px;width:13px;height:11.5px;border:1px solid #9a968e;border-right-color:#fff;border-bottom-color:#fff;box-sizing:border-box;"></div>
<div class="a" style="left:690.2px;top:433.2px;width:8.6px;height:8.6px;border-radius:50%;background:radial-gradient(circle at 45% 40%,#4aff4a 0%,#22e022 60%,#18b018 100%);"></div>
<!-- dialog -->
<div class="a" id="dlg" style="left:38.5px;top:142.4px;width:161px;height:119.4px;background:#d4d0c8;border:1px solid #f4f3f0;border-right-color:#505050;border-bottom-color:#505050;box-sizing:border-box;box-shadow:inset -1px -1px 0 #8a867e;">
</div>
<div class="a" style="left:40.5px;top:144.5px;width:157px;height:10.2px;background:linear-gradient(90deg,#0a246a 0%,#2c4c94 40%,#86a9dc 80%,#a6caf0 100%);"></div>
<svg class="a" style="left:41px;top:145px" width="9" height="9"><rect x="0.5" y="0.5" width="8" height="8" fill="#1d6a1d"/><rect x="3" y="1.5" width="3" height="2.6" fill="#6cc86c"/><rect x="5" y="4.5" width="2.5" height="2.6" fill="#b0e0b0"/><rect x="2" y="4.5" width="2" height="2.2" fill="#3c983c"/></svg>
<div class="t" style="transform:scaleX(0.8938);left:52.2px;top:145.8px;font-size:7.6px;font-weight:bold;color:#fff;">Export Image</div>
<div class="btn" style="left:187.5px;top:145.6px;width:8.5px;height:8px;"></div>
<svg class="a" style="left:187.5px;top:145.6px" width="9" height="8"><path d="M2.3,2 l3.6,3.6 M5.9,2 l-3.6,3.6" stroke="#000" stroke-width="1.1" fill="none"/></svg>

<div class="t lab" style="transform:scaleX(0.7667);left:46.5px;top:165px;">File</div>
<div class="inp" style="left:79px;top:162px;width:61px;height:11.5px;"></div>
<div class="t" style="transform:scaleX(0.8235);left:80.5px;top:164.5px;font-size:7.5px;-webkit-text-stroke:0.15px #333;margin-top:-0.2px;">esign/Traces_raf.png</div>
<div class="btn" style="left:144.2px;top:161.5px;width:46.8px;height:13px;border-color:#3a3a3a;box-shadow:inset 1px 1px 0 #fff,inset -1px -1px 0 #6a6a6a;"></div>
<div class="t lab" style="transform:scaleX(0.8550);left:154.2px;top:165px;">Browse...</div>
<div class="inp" style="left:80.3px;top:179.5px;width:7.2px;height:7.2px;"></div>
<div class="t lab" style="transform:scaleX(0.7415);left:89.5px;top:179.8px;">Clipboard</div>
<div class="inp" style="left:144.4px;top:179.5px;width:7.2px;height:7.2px;"></div>
<div class="t lab" style="transform:scaleX(0.7443);left:154px;top:179.8px;">Monochrome</div>
<div class="t lab" style="transform:scaleX(0.7680);left:46.5px;top:194px;">Resolution</div>
<div class="inp" style="left:79px;top:192px;width:61px;height:10.5px;"></div>
<div class="t" style="transform:scaleX(0.7111);left:81.5px;top:194.5px;font-size:7.5px;-webkit-text-stroke:0.15px #333;margin-top:-0.2px;">600</div>
<svg class="a" style="left:132px;top:193px" width="7" height="9"><rect width="7" height="9" fill="#d4d0c8"/><path d="M0,4.5 h7" stroke="#888" stroke-width=".6"/><path d="M1.8,3.2 h3.4 l-1.7,-2z M1.8,5.8 h3.4 l-1.7,2z" fill="#222"/></svg>
<div class="t lab" style="transform:scaleX(0.7501);left:144.5px;top:194px;">dpi</div>
<div class="t lab" style="transform:scaleX(0.7565);left:46.5px;top:208px;">Image Size</div>
<div class="a" style="left:79px;top:206.8px;width:61px;height:10.2px;background:#d8d5ce;border:1px solid #8a867e;border-right-color:#f4f3f0;border-bottom-color:#f4f3f0;box-sizing:border-box;"></div>
<div class="t" style="transform:scaleX(0.8000);left:81.5px;top:208.4px;font-size:7px;color:#8a8a88;">964 x 727</div>
<div class="t lab" style="transform:scaleX(0.7083);left:144.5px;top:208px;">pixel</div>
<div class="t lab" style="transform:scaleX(0.8062);left:46.5px;top:223px;">Area</div>
<div class="inp" style="left:79px;top:221px;width:61px;height:10.2px;"></div>
<div class="t" style="transform:scaleX(0.6946);left:81.5px;top:222.6px;font-size:7.5px;-webkit-text-stroke:0.15px #333;margin-top:-0.2px;">Full</div>
<div class="dd" style="left:131.5px;top:222px;width:7.5px;height:8.2px;"></div>
<svg class="a" style="left:131.5px;top:222px" width="8" height="8"><path d="M1.8,3 h4 l-2,2.5z" fill="#000"/></svg>
<div class="btn" style="left:103px;top:241px;width:41.5px;height:12.5px;"></div>
<div class="t lab" style="transform:scaleX(0.7741);left:119.5px;top:244px;">OK</div>
<div class="btn" style="left:149px;top:241px;width:41.5px;height:12.5px;"></div>
<div class="t lab" style="transform:scaleX(0.7478);left:159px;top:244px;">Cancel</div>
</body></html>
